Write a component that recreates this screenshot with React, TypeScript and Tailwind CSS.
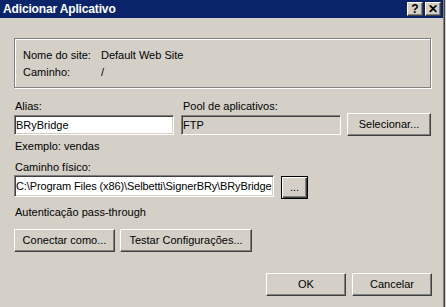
const btn =
  "flex items-center justify-center bg-[#d4d0c8] text-black border border-t-white border-l-white border-r-[#404040] border-b-[#404040] shadow-[inset_-1px_-1px_0_#808080]";

const field =
  "flex items-center pl-[1px] overflow-hidden whitespace-nowrap border border-t-[#808080] border-l-[#808080] border-r-white border-b-white shadow-[inset_1px_1px_0_#404040,inset_-1px_-1px_0_#d4d0c8]";

const TitleButton = ({ children }: { children: React.ReactNode }) => (
  <div className="w-[16px] h-[14px] flex items-center justify-center bg-[#d4d0c8] border border-t-white border-l-white border-r-[#404040] border-b-[#404040] shadow-[inset_-1px_-1px_0_#808080] text-black text-[12px] font-bold leading-none">
    {children}
  </div>
);

export default function App() {
  return (
    <div className="w-[446px] h-[307px] overflow-hidden flex bg-[#d4d0c8] font-['Liberation_Sans',Arial,sans-serif] text-[11px] leading-[13px] text-black">
      <div className="flex-1 flex flex-col">
        {/* Barra de título */}
        <div className="h-[18px] bg-[#0a246a] flex items-center pl-[3px] pr-[2px]">
          <span className="text-white font-bold text-[12px] tracking-[-0.15px]">Adicionar Aplicativo</span>
          <div className="flex-1"></div>
          <div className="flex gap-[2px]">
            <TitleButton>?</TitleButton>
            <TitleButton>✕</TitleButton>
          </div>
        </div>

        <div className="flex flex-col pl-[14px] pr-[12px]">
          {/* Info do site */}
          <div className="mt-[20px] h-[50px] border border-[#808080] shadow-[inset_1px_1px_0_#fff,1px_1px_0_#fff] pt-[8px] pl-[8px] leading-[17px]">
            <div className="flex">
              <span className="w-[78px]">Nome do site:</span>
              <span>Default Web Site</span>
            </div>
            <div className="flex">
              <span className="w-[78px]">Caminho:</span>
              <span>/</span>
            </div>
          </div>

          {/* Alias e Pool */}
          <div className="mt-[12px] flex items-end gap-[7px]">
            <div className="w-[160px] flex flex-col">
              <span className="ml-[1px]">Alias:</span>
              <div className={`${field} mt-[2px] h-[20px] bg-white`}>BRyBridge</div>
            </div>
            <div className="w-[160px] flex flex-col">
              <span className="ml-[2px]">Pool de aplicativos:</span>
              <div className={`${field} mt-[2px] h-[20px] bg-[#d4d0c8]`}>FTP</div>
            </div>
            <button className={`${btn} ml-[-1px] mb-[-1px] w-[84px] h-[23px]`}>Selecionar...</button>
          </div>

          <span className="mt-[5px] ml-[1px]">Exemplo: vendas</span>

          <span className="mt-[8px] ml-[1px]">Caminho físico:</span>
          <div className="mt-[1px] flex items-start gap-[7px]">
            <div className={`${field} w-[260px] h-[22px] bg-white tracking-[-0.12px]`}>
              C:\Program Files (x86)\Selbetti\SignerBRy\BRyBridge
            </div>
            <button className="w-[27px] h-[23px] mt-[1px] flex items-center justify-center bg-[#d4d0c8] border border-black shadow-[inset_1px_1px_0_#fff,inset_-1px_-1px_0_#404040,inset_-2px_-2px_0_#808080]">
              ...
            </button>
          </div>

          <span className="mt-[7px] ml-[1px]">Autenticação pass-through</span>

          <div className="mt-[10px] flex gap-[5px]">
            <button className={`${btn} w-[101px] h-[23px]`}>Conectar como...</button>
            <button className={`${btn} w-[132px] h-[23px]`}>Testar Configurações...</button>
          </div>

          <div className="mt-[21px] flex justify-end gap-[6px] mr-[-1px]">
            <button className={`${btn} w-[80px] h-[23px]`}>OK</button>
            <button className={`${btn} w-[80px] h-[23px]`}>Cancelar</button>
          </div>
        </div>
      </div>
      {/* Borda direita da janela */}
      <div className="w-[3px] flex">
        <div className="w-[1px] bg-[#808080]"></div>
        <div className="w-[1px] bg-[#404040]"></div>
        <div className="w-[1px] bg-[#d4d0c8]"></div>
      </div>
    </div>
  );
}
